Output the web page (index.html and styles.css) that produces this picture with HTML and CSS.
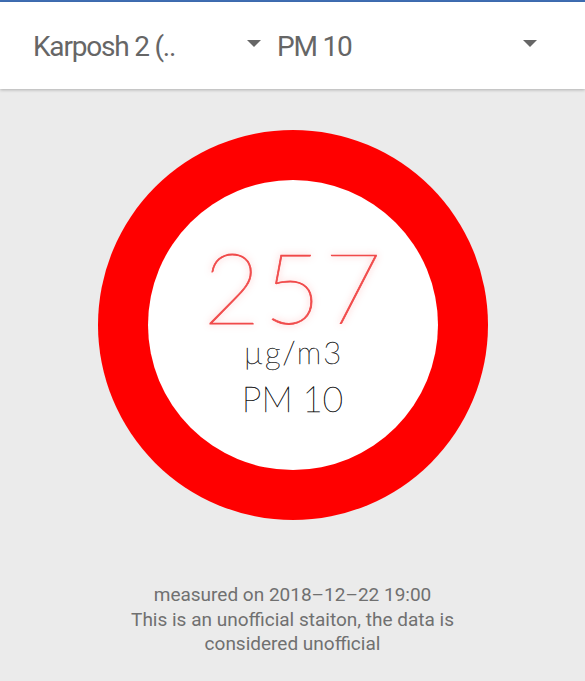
FILE: index.html
```html
<!DOCTYPE html>
<html>
<head>
<meta charset="utf-8">
<link rel="stylesheet" href="styles.css">
</head>
<body>
<div class="topline"></div>
<header class="toolbar">
  <div class="select select-station">
    <span class="select-text">Karposh 2 (..</span>
    <span class="caret"></span>
  </div>
  <div class="select select-type">
    <span class="select-text">PM 10</span>
    <span class="caret"></span>
  </div>
</header>
<main class="content">
  <div class="gauge">
    <div class="gauge-inner">
      <div class="value">257</div>
      <div class="unit">µg/m3</div>
      <div class="pollutant">PM 10</div>
    </div>
  </div>
  <div class="footer">
    <div>measured on 2018–12–22 19:00</div>
    <div>This is an unofficial staiton, the data is<br>considered unofficial</div>
  </div>
</main>
</body>
</html>
```
FILE: styles.css
```css
html, body {
  margin: 0;
  padding: 0;
}
body {
  width: 585px;
  height: 681px;
  background: #ebebeb;
  font-family: Roboto, "Liberation Sans", sans-serif;
  overflow: hidden;
}
.topline {
  height: 2px;
  background: #3f6fb5;
}
.toolbar {
  height: 87px;
  background: #ffffff;
  display: flex;
  align-items: center;
  box-shadow: 0 1px 3px rgba(0,0,0,0.25);
  position: relative;
  z-index: 1;
}
.select {
  display: flex;
  align-items: center;
  justify-content: space-between;
  color: #666666;
  font-size: 28px;
  letter-spacing: -1.2px;
}
.select-station {
  width: 228px;
  margin-left: 33px;
  padding-top: 2px;
}
.select-type {
  width: 260px;
  margin-left: 16px;
  padding-top: 2px;
}
.caret {
  width: 0;
  height: 0;
  border-left: 7px solid transparent;
  border-right: 7px solid transparent;
  border-top: 7px solid #666666;
  margin-top: -6px;
}
.content {
  display: flex;
  flex-direction: column;
  align-items: center;
}
.gauge {
  margin-top: 41px;
  width: 390px;
  height: 390px;
  border-radius: 50%;
  background: #ff0000;
  display: flex;
  align-items: center;
  justify-content: center;
}
.gauge-inner {
  width: 290px;
  height: 290px;
  border-radius: 50%;
  background: #ffffff;
  display: flex;
  flex-direction: column;
  align-items: center;
}
.value {
  margin-top: 64px;
  padding-left: 3px;
  font-family: Lato, "Noto Sans", sans-serif;
  font-weight: 100;
  font-size: 99px;
  line-height: 84px;
  color: #f04a4a;
  -webkit-text-stroke: 0.8px #f04a4a;
  text-shadow: 0 0 7px rgba(255,70,70,0.6);
  letter-spacing: 3px;
}
.unit {
  margin-top: 8px;
  padding-left: 2px;
  font-family: Lato, "Noto Sans", sans-serif;
  font-weight: 100;
  font-size: 31px;
  line-height: 32px;
  letter-spacing: 2px;
  color: #222222;
  -webkit-text-stroke: 0.4px #222222;
}
.pollutant {
  margin-top: 11px;
  font-family: Lato, "Noto Sans", sans-serif;
  font-weight: 100;
  font-size: 35px;
  line-height: 38px;
  letter-spacing: 0;
  color: #111111;
  -webkit-text-stroke: 0.4px #111111;
}
.footer {
  margin-top: 63px;
  text-align: center;
  color: #707070;
  font-size: 19px;
  line-height: 24.5px;
}
```
